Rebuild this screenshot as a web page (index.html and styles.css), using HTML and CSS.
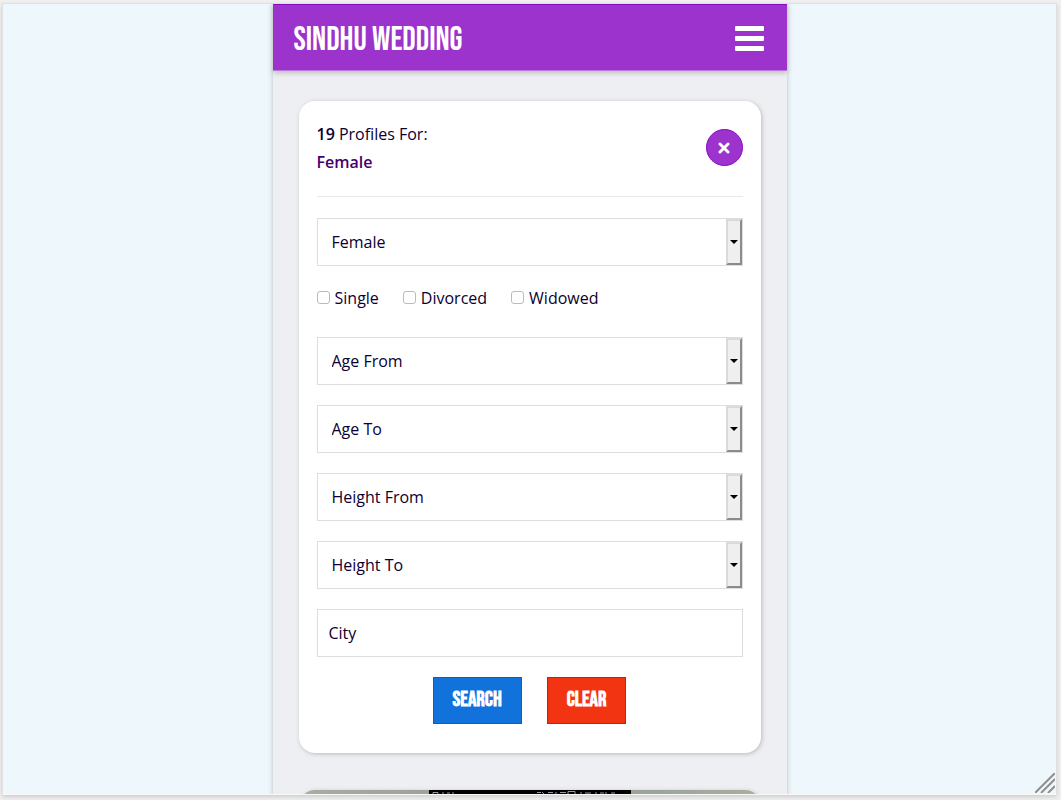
FILE: index.html
```html
<!DOCTYPE html>
<html lang="en">
<head>
<meta charset="utf-8">
<meta name="viewport" content="width=device-width, initial-scale=1">
<title>Sindhu Wedding</title>
<link rel="stylesheet" href="styles.css">
</head>
<body>
<div class="viewport">
  <div class="page">
    <header class="header">
      <a class="brand" href="#">SINDHU WEDDING</a>
      <button class="menu" type="button" aria-label="Menu">
        <svg width="30" height="26" viewBox="0 0 30 26" fill="#fff" aria-hidden="true"><rect x="1" width="29" height="5" rx="1"/><rect x="1" y="10" width="29" height="5" rx="1"/><rect x="1" y="20" width="29" height="5" rx="1"/></svg>
      </button>
    </header>
    <main class="content">
      <section class="card">
        <div class="summary">
          <p class="count"><strong>19</strong> Profiles For:<br><b class="who">Female</b></p>
          <button class="close" type="button" aria-label="Close">
            <svg width="12" height="12" viewBox="0 0 12 12" stroke="#fff" stroke-width="3" stroke-linecap="round" aria-hidden="true"><path d="M2 2l8 8M10 2l-8 8"/></svg>
          </button>
        </div>
        <form class="filters">
          <div class="pick"><select class="field" aria-label="Gender"><option>Female</option><option>Male</option></select><span class="arrow"></span></div>
          <div class="status">
            <label class="check"><input type="checkbox">Single</label>
            <label class="check"><input type="checkbox">Divorced</label>
            <label class="check"><input type="checkbox">Widowed</label>
          </div>
          <div class="pick"><select class="field" aria-label="Age From"><option>Age From</option></select><span class="arrow"></span></div>
          <div class="pick"><select class="field" aria-label="Age To"><option>Age To</option></select><span class="arrow"></span></div>
          <div class="pick"><select class="field" aria-label="Height From"><option>Height From</option></select><span class="arrow"></span></div>
          <div class="pick"><select class="field" aria-label="Height To"><option>Height To</option></select><span class="arrow"></span></div>
          <input class="field city" type="text" placeholder="City" aria-label="City">
          <div class="actions">
            <button class="btn search" type="submit">SEARCH</button>
            <button class="btn clear" type="reset">CLEAR</button>
          </div>
        </form>
      </section>
      <article class="profile"><div class="photo">
        <svg width="202" height="12" viewBox="0 0 202 12" fill="none" stroke="#999" aria-hidden="true"><path d="M4 6V2.500h5V6M14 5V2M18 3h3M24 2v2M108 2.500h4M113 2l2 2M119 2.500h5M127 2v2M131 2.500h6M139 1.500h7v4h-7zM152 2v2M156 3h6M167 2v2M171 3h4M177 2v2M182 3h4"/></svg>
      </div></article>
    </main>
  </div>
  <svg class="grip" width="20" height="20" viewBox="0 0 20 20" stroke="#8f8f8f" stroke-width="2" aria-hidden="true"><path d="M0 20L20 0M6 20L20 6M13 20l7-7"/></svg>
</div>
</body>
</html>
```
FILE: styles.css
```css
* { box-sizing: border-box; }
body {
  margin: 0;
  padding: 3px 4px 5px 2px;
  height: 100vh;
  background: #f1f0f0;
  color: #0b0030;
  font: 16px/28px "Open Sans", sans-serif;
}
button, input, select { font: inherit; color: inherit; }
.viewport {
  position: relative;
  height: 100%;
  overflow: hidden;
  border: 1px solid #e0e0e0;
  border-bottom-color: #f8f8f8;
  background: #eef7fb;
  box-shadow: 0 2px 4px #ccc;
}
.page {
  width: 100%;
  max-width: 514px;
  min-height: 100%;
  margin: 0 auto;
  background: #eeeff2;
  box-shadow: 0 0 5px #b9c0c6;
}
.header {
  display: flex;
  align-items: center;
  justify-content: space-between;
  height: 67px;
  padding: 2px 23px 0 21px;
  background: #9b33cc;
  border-top: 1px solid #8d08c4;
  border-bottom: 1px solid #b97bd9;
  box-shadow: 0 2px 5px #bbb;
}
.brand, .btn { font-family: "Bebas Neue", "Liberation Sans Narrow", "Liberation Sans", sans-serif; }
.brand { padding-top: 2px; color: #fff; text-decoration: none; font-size: 33px; line-height: 40px; }
.menu { display: flex; padding: 0; border: 0; background: none; }
.content { padding: 30px 26px 0; }
.card {
  padding: 19px 18px 29px;
  border-radius: 16px;
  background: #fff;
  box-shadow: 1px 1px 4px #bbb;
}
.summary {
  display: flex;
  justify-content: space-between;
  align-items: flex-start;
  padding-bottom: 20px;
  border-bottom: 1px solid #e8e8e8;
}
.count { margin: 0; }
.count strong { font-weight: 600; }
.who { color: #46006e; font-weight: 600; }
.close {
  display: flex;
  align-items: center;
  justify-content: center;
  width: 37px;
  height: 37px;
  margin-top: 9px;
  padding: 0;
  border: 1px solid #8d08c4;
  border-radius: 50%;
  background: #9b33cc;
}
.filters { display: flex; flex-direction: column; gap: 20px; padding-top: 21px; }
.pick { position: relative; display: flex; }
.field {
  width: 100%;
  height: 48px;
  padding: 0 14px;
  border: 1px solid #dedede;
  border-radius: 0;
  background: #fff;
  appearance: none;
}
.city { padding: 0 11px; }
.city::placeholder { color: #0b0030; opacity: 1; }
.arrow {
  position: absolute;
  top: 1px;
  right: 1px;
  bottom: 1px;
  width: 16px;
  display: flex;
  align-items: center;
  justify-content: center;
  border: 2px solid;
  border-color: #dadada #8b8b8b #8b8b8b #dadada;
  background: #efefef;
  pointer-events: none;
}
.arrow::before {
  content: "";
  border: 4px solid transparent;
  border-top-color: #000;
  border-bottom: 0;
}
.status { display: flex; gap: 24px; padding-bottom: 7px; line-height: 24px; }
.check { display: flex; align-items: center; gap: 5px; }
.check input {
  appearance: none;
  width: 13px;
  height: 13px;
  margin: 0 0 2px;
  border: 1px solid #bbb;
  border-radius: 3px;
  background: #fff;
}
.check input:checked { background: #9b33cc; }
.actions { display: flex; justify-content: center; gap: 25px; }
.btn {
  height: 47px;
  padding: 0 19px 2px;
  border: 1px solid #0360cc;
  color: #fff;
  font-size: 21px;
  font-weight: 700;
  line-height: 24px;
}
.search { background: #1272dc; }
.clear { background: #f23412; border-color: #ea1000; }
.profile {
  margin-top: 37px;
  height: 400px;
  overflow: hidden;
  border-radius: 16px;
  background: linear-gradient(90deg, #a9ada3, #9ca29a 30%, #9aa39c 75%, #abae9e);
  box-shadow: 1px 1px 4px #bbb;
}
.photo { width: 202px; height: 100%; margin: 0 auto; background: #000; }
.photo svg { display: block; }
.grip { position: absolute; right: 1px; bottom: 1px; }
```
